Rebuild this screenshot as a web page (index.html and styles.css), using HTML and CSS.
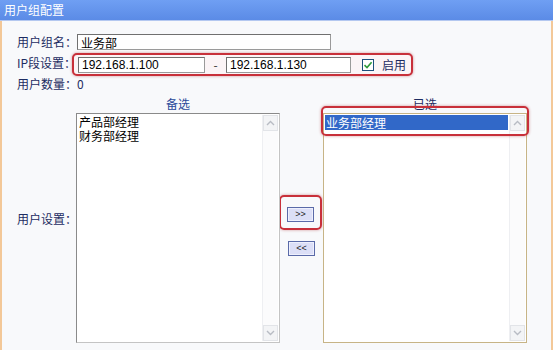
FILE: index.html
```html
<!DOCTYPE html>
<html lang="zh-CN">
<head>
  <meta charset="UTF-8" />
  <title>用户组配置</title>
  <link rel="stylesheet" href="styles.css">
</head>
<body>
  <div class="title">用户组配置</div>
  <div class="panel">
    <div class="row">
      <span class="label">用户组名：</span>
      <input class="text name" type="text" value="业务部">
    </div>
    <div class="row">
      <span class="label">IP段设置：</span>
      <div class="mark ip-mark">
        <input class="text ip-from" type="text" value="192.168.1.100">
        <span class="dash">-</span>
        <input class="text ip-to" type="text" value="192.168.1.130">
        <span class="check">
          <svg width="10" height="10" viewBox="0 0 10 10"><path d="M1.5 5.2 L4 7.6 L8.6 2.2" fill="none" stroke="#2f9a3c" stroke-width="1.6"/></svg>
        </span>
        <span class="enable">启用</span>
      </div>
    </div>
    <div class="row count">
      <span class="label">用户数量：</span><span>0</span>
    </div>

    <div class="users">
      <span class="head left-head">备选</span>
      <span class="head right-head">已选</span>
      <span class="label users-label">用户设置：</span>

      <div class="list">
        <div class="items">
          <div class="item">产品部经理</div>
          <div class="item">财务部经理</div>
        </div>
        <div class="scroll">
          <span class="arrow"><svg width="9" height="6" viewBox="0 0 9 6"><path d="M1 5 L4.5 1.5 L8 5" fill="none" stroke="#b8bcc4" stroke-width="1.4"/></svg></span>
          <span class="arrow"><svg width="9" height="6" viewBox="0 0 9 6"><path d="M1 1 L4.5 4.5 L8 1" fill="none" stroke="#b8bcc4" stroke-width="1.4"/></svg></span>
        </div>
      </div>

      <div class="moves">
        <div class="mark btn-mark">
          <button class="move">&gt;&gt;</button>
        </div>
        <button class="move">&lt;&lt;</button>
      </div>

      <div class="list chosen">
        <div class="items">
          <div class="item selected">业务部经理</div>
        </div>
        <div class="scroll">
          <span class="arrow"><svg width="9" height="6" viewBox="0 0 9 6"><path d="M1 5 L4.5 1.5 L8 5" fill="none" stroke="#b8bcc4" stroke-width="1.4"/></svg></span>
          <span class="arrow"><svg width="9" height="6" viewBox="0 0 9 6"><path d="M1 1 L4.5 4.5 L8 1" fill="none" stroke="#b8bcc4" stroke-width="1.4"/></svg></span>
        </div>
        <div class="mark item-mark"></div>
      </div>
    </div>
  </div>
</body>
</html>
```

FILE: styles.css
```css
body {
  margin: 0;
  width: 553px;
  height: 350px;
  overflow: hidden;
  background: #f4f6fa;
  font-family: "Noto Sans CJK SC", sans-serif;
  font-size: 12px;
  color: #1d2c62;
}
.title {
  height: 20px;
  line-height: 20px;
  padding-left: 4px;
  color: #fff;
  background: linear-gradient(#6f9ff3, #5b8be6);
  border-bottom: 1px solid #b4c8f0;
}
.panel {
  width: 534px;
  height: 329px;
  padding: 13px 0 0 15px;
  background: #f8f9fb;
  border-left: 2px solid #f3c898;
  border-right: 2px solid #f3c898;
  box-sizing: content-box;
}
.row {
  display: flex;
  align-items: center;
}
.label {
  width: 60px;
  line-height: 14px;
  white-space: nowrap;
}
.text {
  height: 16px;
  box-sizing: border-box;
  margin: 0;
  padding: 0 3px;
  border: 1px solid #707070;
  border-right-color: #9a9a9a;
  border-bottom-color: #9a9a9a;
  background: #fff;
  font-family: "Liberation Sans", "Noto Sans CJK SC", sans-serif;
  font-size: 12px;
  color: #000;
  outline: none;
}
.name {
  width: 254px;
  font-family: "Noto Sans CJK SC", sans-serif;
}
.mark {
  border: 2px solid #c8303a;
  border-radius: 5px;
  box-shadow: 0 0 3px rgba(160, 20, 30, 0.45);
}
.ip-mark {
  display: flex;
  align-items: center;
  margin: 3px 0 0 -5px;
  padding: 1px 5px 1px 4px;
  background: #fbf4f6;
}
.ip-from { width: 127px; }
.ip-to { width: 125px; }
.dash {
  width: 21px;
  text-align: center;
  color: #333;
}
.check {
  display: flex;
  align-items: center;
  justify-content: center;
  width: 12px;
  height: 12px;
  box-sizing: border-box;
  margin-left: 11px;
  border: 1px solid #1c4f7c;
  background: #fff;
}
.enable {
  margin-left: 8px;
  line-height: 14px;
}
.count {
  margin-top: 1px;
  line-height: 14px;
}
.users {
  display: grid;
  grid-template-columns: 59px 204px 43px 204px;
  grid-template-rows: 14px 230px;
  row-gap: 2px;
  margin-top: 6px;
}
.head {
  line-height: 14px;
  text-align: center;
}
.left-head { grid-column: 2; grid-row: 1; color: #2a4a9a; }
.right-head { grid-column: 4; grid-row: 1; }
.users-label {
  grid-column: 1;
  grid-row: 2;
  margin-top: 99px;
}
.list {
  position: relative;
  display: flex;
  grid-row: 2;
  grid-column: 2;
  border: 1px solid #8a8a8a;
  border-right-color: #c4c4c4;
  border-bottom-color: #c4c4c4;
  background: #fff;
}
.list.chosen {
  grid-column: 4;
  border-color: #c7b486;
}
.items {
  flex: 1;
  padding: 1px 1px 0 1px;
  color: #000;
}
.item {
  height: 14px;
  line-height: 14px;
  padding-left: 1px;
}
.selected {
  height: 15px;
  line-height: 15px;
  background: #3168c8;
  color: #fff;
}
.scroll {
  display: flex;
  flex-direction: column;
  justify-content: space-between;
  width: 15px;
  margin: 1px 1px 1px 0;
  background: #fbfbfc;
  border-left: 1px solid #eeeff2;
}
.arrow {
  display: flex;
  align-items: center;
  justify-content: center;
  height: 14px;
  background: #f3f4f6;
  border: 1px solid #e2e4e8;
}
.moves {
  grid-column: 3;
  grid-row: 2;
  display: flex;
  flex-direction: column;
  align-items: center;
  padding-top: 82px;
}
.btn-mark {
  padding: 6px 6px;
  margin-left: -2px;
}
.move {
  width: 27px;
  height: 15px;
  padding: 0;
  border: 1px solid #5a6aa8;
  background: #dcdff7;
  box-shadow: inset 0 0 0 1px #eef0fd;
  font-family: "Liberation Sans", sans-serif;
  font-size: 9px;
  color: #222;
}
.moves > .move {
  margin-top: 11px;
}
.item-mark {
  position: absolute;
  top: -8px;
  left: -3px;
  right: -3px;
  height: 26px;
}
```
